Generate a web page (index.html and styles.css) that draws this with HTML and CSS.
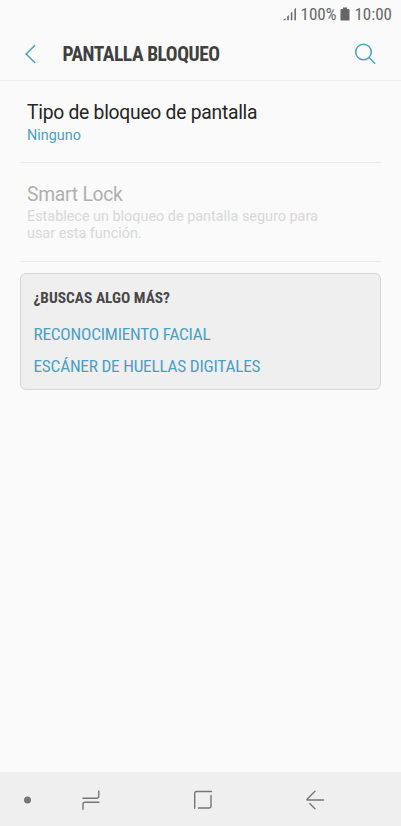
FILE: index.html
```html
<!DOCTYPE html>
<html lang="es">
<head>
<meta charset="utf-8">
<title>Pantalla bloqueo</title>
<link rel="stylesheet" href="styles.css">
</head>
<body>
<div class="status">
  <svg class="signal" width="16" height="14" viewBox="0 0 16 14"><path d="M1 13.200L3.500 11V13.200zM5.200 9.500L6.800 8V13.200H5.200zM8.800 6L10.300 4.600V13.200H8.800zM12.400 2.300L13.900 .8V13.200H12.400z"/></svg>
  <span class="condensed percent">100%</span>
  <svg class="battery" width="10" height="14" viewBox="0 0 10 14"><path d="M3 .5H7V2H8.5Q9.5 2 9.5 3V13.500H.5V3Q.5 2 1.500 2H3z"/></svg>
  <span class="condensed clock">10:00</span>
</div>
<header class="header">
  <svg class="back" width="12" height="20" viewBox="0 0 12 20"><path d="M10.700 1.500L2.100 10L10.700 18.500"/></svg>
  <h1 class="condensed title">PANTALLA BLOQUEO</h1>
  <svg class="search" width="22" height="22" viewBox="0 0 22 22"><circle cx="9.500" cy="9" r="7.800"/><path d="M15 14.500L20.700 20.200"/></svg>
</header>
<main>
  <section class="row lock-type">
    <h2>Tipo de bloqueo de pantalla</h2>
    <p>Ninguno</p>
  </section>
  <section class="row smart">
    <h2>Smart Lock</h2>
    <p>Establece un bloqueo de pantalla seguro para<br>usar esta función.</p>
  </section>
  <section class="card">
    <h3 class="condensed">¿BUSCAS ALGO MÁS?</h3>
    <a class="condensed face">RECONOCIMIENTO FACIAL</a>
    <a class="condensed finger">ESCÁNER DE HUELLAS DIGITALES</a>
  </section>
</main>
<nav class="nav">
  <svg class="dot" width="8" height="8" viewBox="0 0 8 8"><circle cx="3.500" cy="4" r="3.500"/></svg>
  <svg class="recents" width="20" height="22" viewBox="0 0 20 22"><path d="M2 9.300H15.500Q17.800 9.300 17.800 7V2M18 13.200H4Q2 13.200 2 15.200V20.300"/></svg>
  <svg class="home" width="20" height="20" viewBox="0 0 20 20"><path d="M1.700 18.300V3.300Q1.700 1.500 3.500 1.500H18.500M18 5.500V16Q18 18 16 18H5.500"/></svg>
  <svg class="return" width="20" height="20" viewBox="0 0 20 20"><path d="M10 1.300L2.300 9Q1.500 10 2.500 10H18.500M4.800 13.500L10 18.700"/></svg>
</nav>
</body>
</html>
```
FILE: styles.css
```css
* { box-sizing: border-box; margin: 0; padding: 0; }
body {
  height: 826px;
  display: flex;
  flex-direction: column;
  background: #fafafa;
  font-family: Roboto, sans-serif;
  overflow: hidden;
}
svg { display: block; flex: none; fill: none; stroke-linecap: round; }
.condensed { font-family: "Roboto Condensed", Roboto, sans-serif; font-stretch: 75%; white-space: nowrap; }
.status {
  height: 28px;
  padding: 0 9px 0 0;
  display: flex;
  align-items: center;
  justify-content: flex-end;
  color: #666;
  font-size: 17px;
}
.signal, .battery { fill: #666; }
.signal { margin-right: 3px; }
.battery { margin: 0 4px; }
.header {
  height: 53px;
  flex: none;
  padding: 0 25px 0 24px;
  display: flex;
  align-items: center;
  border-bottom: 1px solid #efefef;
}
.back, .search { stroke: #4b9fc2; stroke-width: 1.500; }
.title { margin-left: 26.500px; font-size: 19.500px; font-weight: 700; letter-spacing: -.460px; color: #404040; }
.search { margin-left: auto; }
main { flex: 1; padding: 0 20px; }
.row { padding-left: 7px; border-bottom: 1px solid #ebebeb; }
.row h2 { font-size: 19.300px; line-height: 24px; font-weight: 400; letter-spacing: -.260px; }
.row p { font-size: 14.400px; line-height: 17px; }
.lock-type { height: 82px; padding-top: 20px; color: #252525; }
.lock-type p { margin-top: 2px; color: #4b9fc2; }
.smart { height: 99px; padding-top: 20px; color: #afafaf; }
.smart p { margin-top: 1px; color: #d8d8d8; }
.card {
  margin-top: 11px;
  height: 117px;
  padding: 14px 12.500px;
  border: 1px solid #d6d6d6;
  border-radius: 6px;
  background: #efefef;
}
.card h3 { font-size: 15.400px; line-height: 20px; color: #484848; }
.card a { display: block; width: max-content; font-size: 17.300px; line-height: 32px; letter-spacing: -.230px; color: #4b9fc2; }
.card .face { margin-top: 10px; }
.nav {
  height: 54px;
  flex: none;
  padding: 2px 0 0 24px;
  display: flex;
  align-items: center;
  background: #efefef;
}
.nav svg { stroke: #777; stroke-width: 1.400; }
.nav .dot { fill: #777; stroke: none; }
.recents { margin-left: 49px; }
.home { margin-left: 92px; }
.return { margin-left: 92px; }
```
